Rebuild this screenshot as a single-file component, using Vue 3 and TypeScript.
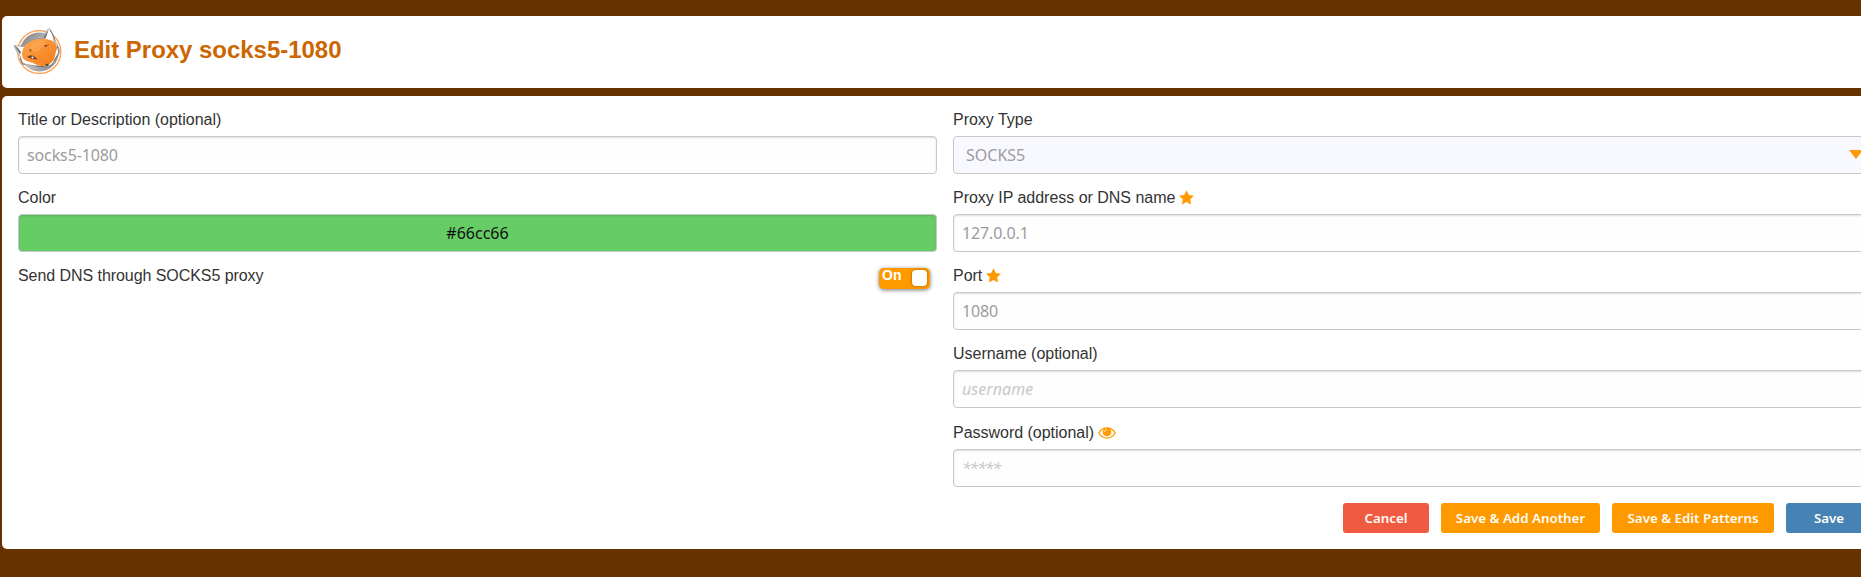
<script setup lang="ts">
import { ref } from 'vue'

interface Field {
  label: string
  value: string
  placeholder?: string
  icon?: 'star' | 'eye'
  type: string
}

const title = ref('socks5-1080')
const color = ref('#66cc66')
const sendDns = ref(true)
const fields = ref<Field[]>([
  { label: 'Proxy IP address or DNS name', value: '127.0.0.1', icon: 'star', type: 'text' },
  { label: 'Port', value: '1080', icon: 'star', type: 'text' },
  { label: 'Username (optional)', value: '', placeholder: 'username', type: 'text' },
  { label: 'Password (optional)', value: '', placeholder: '*****', icon: 'eye', type: 'password' },
])
const buttons = [
  { text: 'Cancel', kind: 'cancel' },
  { text: 'Save & Add Another', kind: 'another' },
  { text: 'Save & Edit Patterns', kind: 'patterns' },
  { text: 'Save', kind: 'save' },
]
</script>

<template>
  <main class="page">
    <header class="card heading">
      <svg class="logo" viewBox="0 0 49 48" aria-hidden="true">
        <defs>
          <linearGradient id="disc" x1="0" y1="0" x2="1" y2="1">
            <stop offset="0" stop-color="#77787c" />
            <stop offset=".5" stop-color="#c4c5c8" />
            <stop offset="1" stop-color="#77787c" />
          </linearGradient>
          <linearGradient id="fur" x1="0" y1="0" x2="1" y2="1">
            <stop offset="0" stop-color="#ffa64d" />
            <stop offset="1" stop-color="#f47b18" />
          </linearGradient>
        </defs>
        <circle cx="26.3" cy="25" r="21.5" fill="#fff" stroke="#ffa45c" stroke-width="1.4" />
        <circle cx="26.3" cy="25" r="19.5" fill="url(#disc)" />
        <path d="M1 18.5 11 19.5Q18 11 31 12L32 6Q34 2 36.5 1.5Q40 6 41 13L45.5 20Q48 26 44 30L40 36 34.5 40.5 24 39 9 37 7.5 30 4 25Z" fill="#fff" stroke="#777" stroke-width=".6" />
        <path d="M1.5 19 7 27.5 8 25 4.5 20.5ZM30.5 11 33 6 35.5 3 34 7.5 32.5 11.5Z" fill="#737373" />
        <path d="M9 27.5C8.5 20 16 12.3 26 12Q36 11 42 15.5C46 22 42.5 24 42 29 41 35 37 36 34.5 39 29 40 24 38 19 35.5 12 34 9 32 9 27.5Z" fill="url(#fur)" />
        <path d="M18 17Q25 11.5 33 14 30 22 24 25L17 23Z" fill="#ffc080" opacity=".25" />
        <path d="M14 30Q18 26.5 22 30L25 32.5 19 32ZM31 18.5Q33 21 37 17L34 18.3Z" fill="#754425" />
        <circle cx="19.5" cy="30.5" r="1" fill="#fff" />
        <circle cx="17.5" cy="23.3" r="1.1" fill="#8a502d" />
        <circle cx="32.5" cy="19" r=".9" fill="#8a502d" />
        <path d="M32 37.3 35.8 36.5 34.5 39.8Z" fill="#444" />
        <path d="M7 31 10 37 12 37M23 39 33 40 36 38M41 34 46 25 44 19M37 3Q41 8 42 14" fill="none" stroke="#666" stroke-width=".9" />
      </svg>
      <h1>Edit Proxy socks5-1080</h1>
    </header>

    <section class="card form">
      <div class="columns">
        <div class="column">
          <label class="label">Title or Description (optional)</label>
          <input v-model="title" class="control">
          <label class="label">Color</label>
          <input v-model="color" class="control color" :style="{ backgroundColor: color }">
          <div class="switch-row">
            <span class="switch-label">Send DNS through SOCKS5 proxy</span>
            <button class="switch" type="button" @click="sendDns = !sendDns">
              <span>{{ sendDns ? 'On' : 'Off' }}</span>
              <i class="knob"></i>
            </button>
          </div>
        </div>

        <div class="column">
          <label class="label">Proxy Type</label>
          <div class="control select">
            <span>SOCKS5</span>
            <svg width="14" height="9" viewBox="0 0 14 9"><path d="M0 0H14L7 9Z" fill="#f90" /></svg>
          </div>
          <template v-for="field in fields" :key="field.label">
            <label class="label" :class="{ password: field.icon === 'eye' }">
              {{ field.label }}
              <svg v-if="field.icon === 'star'" class="star" viewBox="0 0 15 15">
                <path d="M7.5.2 9.8 4.9 15 5.7 11.2 9.3 12.1 14.5 7.5 12.1 2.9 14.5 3.8 9.3 0 5.7 5.2 4.9Z" fill="#f90" />
              </svg>
              <svg v-if="field.icon === 'eye'" class="eye" viewBox="0 0 18 12">
                <path d="M.7 6C5-.8 13-.8 17.3 6 13 12.8 5 12.8.7 6Z" fill="#fff" stroke="#f90" stroke-width="1.3" />
                <circle cx="9" cy="5" r="4.3" fill="#f90" />
                <path d="M6.6 5A2.4 2.4 0 0 1 9 2.6" fill="none" stroke="#fff" stroke-width=".8" />
              </svg>
            </label>
            <input v-model="field.value" class="control" :type="field.type" :placeholder="field.placeholder">
          </template>
        </div>
      </div>
      <div class="actions">
        <button v-for="button in buttons" :key="button.text" type="button" :class="['action', button.kind]">
          {{ button.text }}
        </button>
      </div>
    </section>
  </main>
</template>

<style>
html, body { background: #630; }
body { margin: 0; overflow: hidden; }
</style>

<style scoped>
* { box-sizing: border-box; }
.page {
  width: 1888px;
  height: 577px;
  padding: 16px 0 0 2px;
  background: #630;
  color: #333;
  font: 16px/20px "Liberation Sans", Arial, sans-serif;
}
.card { background: #fff; border-radius: 5px; }
.heading { display: flex; height: 72px; padding: 11px; }
.logo { width: 49px; height: 48px; flex: none; }
h1 { margin: 9px 0 0 12px; color: #c60; font-size: 24px; line-height: 28px; font-weight: bold; letter-spacing: -.03px; }
.form { height: 453px; margin-top: 8px; padding: 14px 16px 16px; }
.columns { display: grid; grid-template-columns: 919px 919px; gap: 16px; }
.column { display: flex; flex-direction: column; }
.label { display: flex; align-items: center; height: 20px; margin-bottom: 6px; gap: 4px; letter-spacing: -.02px; }
.label.password { height: 21px; padding-top: 1px; }
.control {
  width: 100%;
  height: 38px;
  margin: 0 0 14px;
  padding: 0 8px;
  border: 1px solid #c8c8cb;
  border-radius: 4px;
  outline: none;
  background: #fefefe;
  box-shadow: inset 0 1px 2px #0002;
  color: #9c9c9c;
  font: 16px/36px "Noto Sans", sans-serif;
  letter-spacing: -.12px;
}
.control::placeholder { color: #c8c8c8; font-style: italic; opacity: 1; letter-spacing: .05px; }
.control[type="password"]::placeholder { letter-spacing: -1.2px; }
.control.color { color: #111; text-align: center; letter-spacing: 0; }
.select { display: flex; align-items: center; padding: 0 8px 0 12px; background: #f8f8ff; box-shadow: none; letter-spacing: 0; }
.select svg { margin: 0 0 2px auto; }
.star { width: 15px; height: 15px; margin-bottom: 2px; }
.eye { width: 18px; height: 12px; }
.switch-row { display: flex; justify-content: space-between; }
.switch-label { letter-spacing: -.06px; }
.switch {
  display: flex;
  justify-content: space-between;
  width: 51px;
  height: 21px;
  margin: 2px 7px 0 0;
  padding: 2px 3px 2px 3px;
  border: 0;
  border-radius: 5px;
  background: #f90;
  box-shadow: 0 1px 4px #0008;
  color: #fff;
  font: bold 14px/11px "Liberation Sans", Arial, sans-serif;
  letter-spacing: .2px;
}
.knob { width: 15px; height: 16px; border-radius: 4px; background: #fff; box-shadow: 0 0 3px #0006; }
.actions { display: flex; justify-content: flex-end; gap: 12px; margin-top: 2px; }
.action {
  height: 30px;
  padding: 0;
  border: 0;
  border-radius: 3px;
  background: #f90;
  color: #fffdf5;
  font: 600 13.333px/30px "Noto Sans", sans-serif;
  white-space: nowrap;
}
.cancel { width: 86px; background: #ef5a41; }
.another { width: 159px; }
.patterns { width: 162px; }
.save { width: 86px; background: #4682b4; }
</style>
